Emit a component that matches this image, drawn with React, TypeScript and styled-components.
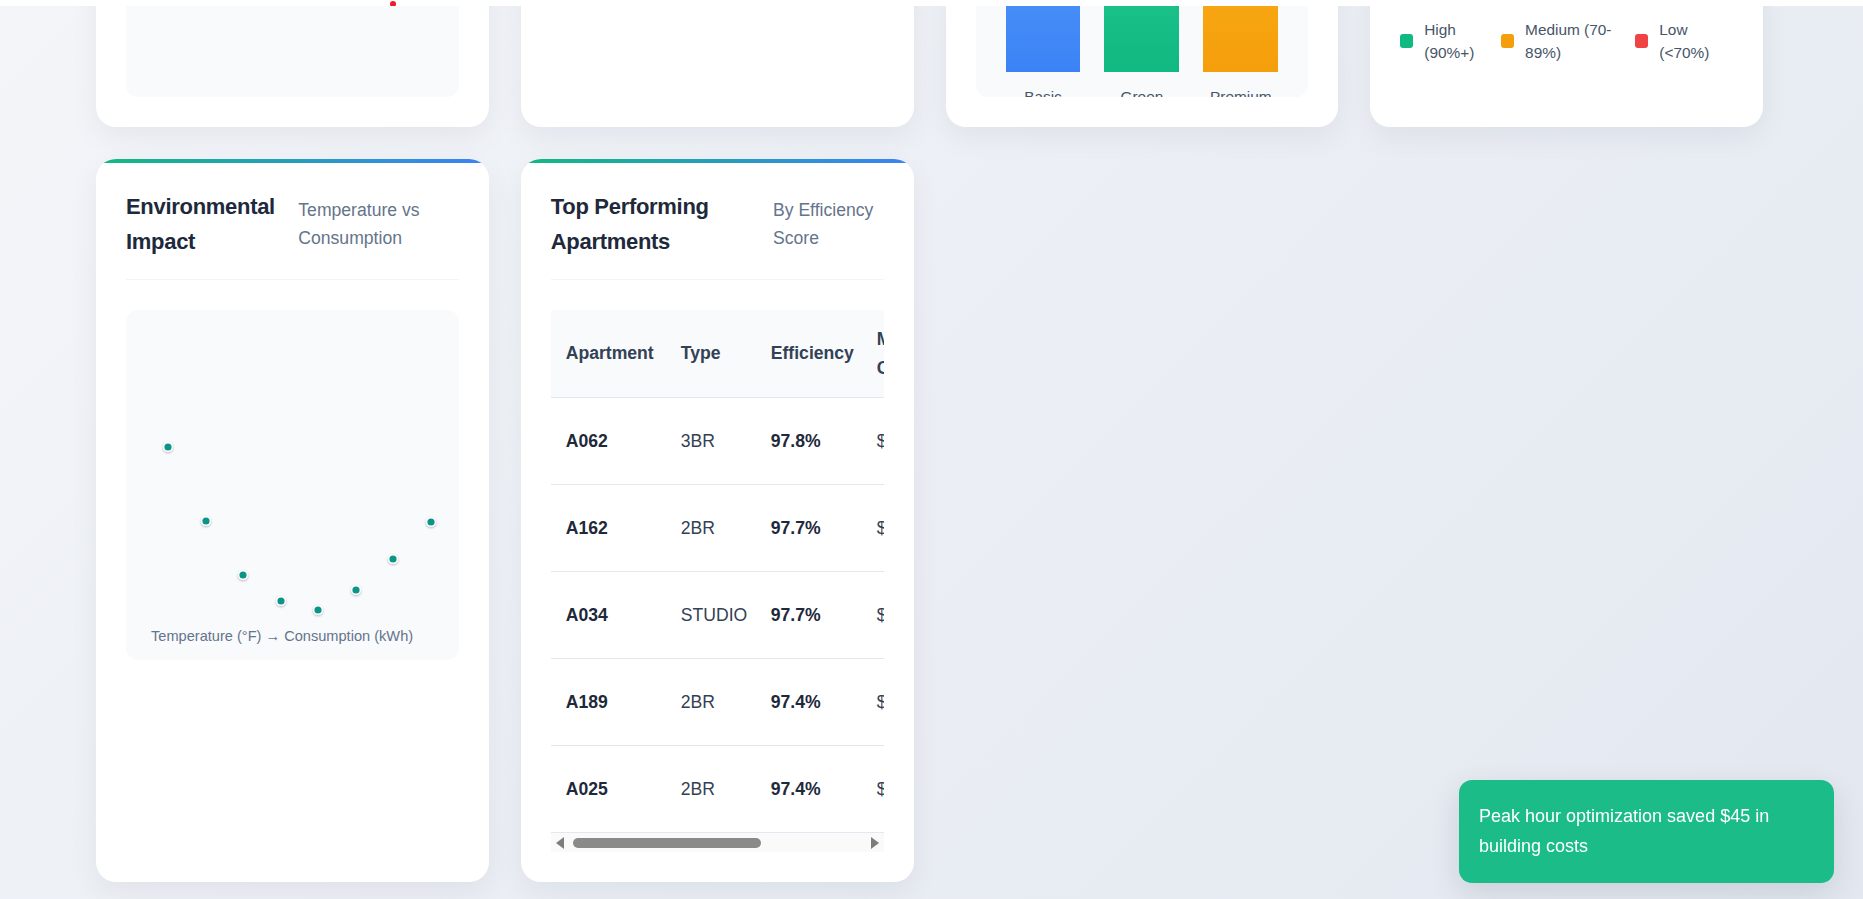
import React from "react";
import styled, { createGlobalStyle } from "styled-components";

const GlobalStyle = createGlobalStyle`
  *, *::before, *::after { box-sizing: border-box; }
  html, body { margin: 0; padding: 0; overflow: hidden; }
  body {
    font-family: "Liberation Sans", Arial, sans-serif;
    font-size: 17.6px;
    line-height: 1.6;
    color: #334155;
    background: #e9edf3;
  }
`;

const Page = styled.div`
  display: flex;
  flex-direction: column;
  height: 100vh;
  overflow: hidden;
  padding: 0 100px 0 96px;
  background: linear-gradient(135deg, #f3f5f9 0%, #e3e8f0 100%);
`;

const TopStrip = styled.div`
  position: fixed;
  top: 0;
  left: 0;
  right: 0;
  height: 6px;
  background: #ffffff;
  z-index: 10;
  overflow: hidden;
`;

const LiveDot = styled.span`
  position: absolute;
  left: 390px;
  top: 1px;
  width: 6px;
  height: 6px;
  border-radius: 50%;
  background: #ef1b2d;
`;

const Dashboard = styled.main`
  display: grid;
  grid-template-columns: repeat(4, minmax(0, 1fr));
  gap: 32px;
  margin-top: -283px;
  flex-shrink: 0;
`;

const Card = styled.section`
  position: relative;
  display: flex;
  flex-direction: column;
  min-width: 0;
  padding: 30px;
  background: #ffffff;
  border-radius: 20px;
  box-shadow: 0 10px 30px rgba(15, 23, 42, 0.06);
  overflow: hidden;

  &::before {
    content: "";
    position: absolute;
    top: 0;
    left: 0;
    right: 0;
    height: 4px;
    background: linear-gradient(90deg, #10b981, #3b82f6);
  }
`;

const CardHeader = styled.header`
  display: flex;
  justify-content: space-between;
  align-items: center;
  gap: 16px;
  padding-bottom: 20px;
  margin-bottom: 30px;
  border-bottom: 1px solid #f1f5f9;
`;

const CardTitle = styled.h3`
  margin: 0;
  font-size: 22px;
  font-weight: 700;
  line-height: 1.6;
  letter-spacing: -0.3px;
  color: #1e293b;
`;

const CardSubtitle = styled.span`
  font-size: 17.6px;
  line-height: 1.6;
  color: #64748b;
`;

const ChartPanel = styled.div<{ $grow?: boolean }>`
  position: relative;
  flex: ${(p) => (p.$grow ? "1 0 350px" : "0 0 350px")};
  min-height: 350px;
  background: #f8fafc;
  border-radius: 12px;
  overflow: hidden;
`;

const ChartCanvas = styled.svg`
  position: absolute;
  inset: 0;
  width: 100%;
  height: 100%;
`;

const ScatterPanel = styled(ChartPanel)`
  display: flex;
  align-items: flex-end;
  padding: 0 25px 12px;
`;

const ChartCaption = styled.span`
  position: relative;
  font-size: 14.6px;
  line-height: 1.6;
  color: #64748b;
`;

const BarPanel = styled(ChartPanel)`
  display: flex;
  align-items: flex-start;
  gap: 24px;
  padding: 30px 30px 0;
`;

const BarColumn = styled.div`
  flex: 1;
  display: flex;
  flex-direction: column;
  align-items: center;
`;

const BarTrack = styled.div`
  width: 100%;
  height: 295px;
  display: flex;
  align-items: flex-end;
`;

const Bar = styled.div<{ $from: string; $to: string }>`
  width: 100%;
  background: linear-gradient(180deg, ${(p) => p.$from}, ${(p) => p.$to});
`;

const BarLabel = styled.span`
  margin-top: 13px;
  font-size: 15.4px;
  line-height: 1.6;
  color: #475569;
`;

const Legend = styled.div`
  display: flex;
  margin: auto 0 33px;
`;

const LegendItem = styled.div`
  display: flex;
  align-items: center;
  gap: 11px;
  min-width: 0;
`;

const LegendSwatch = styled.span<{ $color: string }>`
  flex-shrink: 0;
  width: 13px;
  height: 14px;
  border-radius: 3px;
  background: ${(p) => p.$color};
`;

const LegendText = styled.span`
  font-size: 15.4px;
  line-height: 1.5;
  color: #475569;
`;

const TableScroll = styled.div`
  overflow: hidden;
`;

const Table = styled.table`
  width: 534px;
  table-layout: fixed;
  border-collapse: collapse;
`;

const Th = styled.th`
  padding: 15px;
  text-align: left;
  font-weight: 700;
  font-size: 17.6px;
  line-height: 1.6;
  color: #334155;
  background: #f8fafc;
  border-bottom: 1px solid #e2e8f0;
`;

const Td = styled.td<{ $strong?: boolean }>`
  padding: 29px 15px;
  font-size: 17.6px;
  line-height: 1.6;
  white-space: nowrap;
  font-weight: ${(p) => (p.$strong ? 700 : 400)};
  color: ${(p) => (p.$strong ? "#1e293b" : "#334155")};
  border-bottom: 1px solid #e2e8f0;
`;

const ScrollBar = styled.div`
  display: flex;
  align-items: center;
  gap: 7px;
  height: 19px;
  padding: 0 5px;
  background: #fafafa;
`;

const ScrollArrow = styled.span<{ $dir: "left" | "right" }>`
  flex-shrink: 0;
  width: 0;
  height: 0;
  border-top: 6px solid transparent;
  border-bottom: 6px solid transparent;
  ${(p) =>
    p.$dir === "left"
      ? "border-right: 8px solid #7d7d7d;"
      : "border-left: 8px solid #7d7d7d;"}
`;

const ScrollRail = styled.div`
  flex: 1;
  display: flex;
  align-items: center;
  padding-left: 2px;
`;

const ScrollThumb = styled.span`
  height: 10px;
  border-radius: 5px;
  background: #8a8a8a;
`;

const Toast = styled.div`
  position: fixed;
  right: 29px;
  bottom: 16px;
  width: 375px;
  padding: 21px 20px;
  border-radius: 13px;
  background: rgba(16, 185, 129, 0.95);
  color: #ffffff;
  font-size: 18px;
  line-height: 1.7;
  box-shadow: 0 10px 30px rgba(15, 23, 42, 0.12);
  z-index: 20;
`;

const scatter = [
  [42, 137],
  [80, 211],
  [117, 265],
  [155, 291],
  [192, 300],
  [230, 280],
  [267, 249],
  [305, 212],
];

const bars = [
  { label: "Basic", value: 0.72, from: "#60a5fa", to: "#3b82f6" },
  { label: "Green", value: 0.86, from: "#34d399", to: "#10b981" },
  { label: "Premium", value: 0.95, from: "#fbbf24", to: "#f59e0b" },
];

const legend = [
  { color: "#10b981", text: "High (90%+)" },
  { color: "#f59e0b", text: "Medium (70-89%)" },
  { color: "#ef4444", text: "Low (<70%)" },
];

const apartments = [
  { id: "A062", type: "3BR", eff: "97.8%", cost: "$98.40", save: "$24.10" },
  { id: "A162", type: "2BR", eff: "97.7%", cost: "$84.15", save: "$21.60" },
  { id: "A034", type: "STUDIO", eff: "97.7%", cost: "$52.30", save: "$14.25" },
  { id: "A189", type: "2BR", eff: "97.4%", cost: "$86.70", save: "$20.85" },
  { id: "A025", type: "2BR", eff: "97.4%", cost: "$85.95", save: "$20.40" },
];

const columnWidths = [115, 90, 106, 105, 118];
const TABLE_WIDTH = 534;
const VISIBLE_WIDTH = 345;

export default function App() {
  const thumbShare = Math.min(1, VISIBLE_WIDTH / TABLE_WIDTH);

  return (
    <>
      <GlobalStyle />
      <TopStrip>
        <LiveDot />
      </TopStrip>
      <Page>
        <Dashboard>
          <Card>
            <ChartPanel $grow />
          </Card>

          <Card />

          <Card>
            <BarPanel $grow>
              {bars.map((b) => (
                <BarColumn key={b.label}>
                  <BarTrack>
                    <Bar $from={b.from} $to={b.to} style={{ height: `${b.value * 100}%` }} />
                  </BarTrack>
                  <BarLabel>{b.label}</BarLabel>
                </BarColumn>
              ))}
            </BarPanel>
          </Card>

          <Card>
            <Legend>
              {legend.map((l) => (
                <LegendItem key={l.text}>
                  <LegendSwatch $color={l.color} />
                  <LegendText>{l.text}</LegendText>
                </LegendItem>
              ))}
            </Legend>
          </Card>

          <Card>
            <CardHeader>
              <CardTitle>Environmental Impact</CardTitle>
              <CardSubtitle>Temperature vs Consumption</CardSubtitle>
            </CardHeader>
            <ScatterPanel>
              <ChartCanvas>
                <defs>
                  <filter id="dotShadow" x="-100%" y="-100%" width="300%" height="300%">
                    <feDropShadow dx="0" dy="1" stdDeviation="1" floodColor="#0f172a" floodOpacity="0.3" />
                  </filter>
                </defs>
                {scatter.map(([x, y]) => (
                  <circle
                    key={`${x}-${y}`}
                    cx={x}
                    cy={y}
                    r={3.6}
                    fill="#0d9488"
                    stroke="#ffffff"
                    strokeWidth={3}
                    paintOrder="stroke"
                    filter="url(#dotShadow)"
                  />
                ))}
              </ChartCanvas>
              <ChartCaption>Temperature (°F) → Consumption (kWh)</ChartCaption>
            </ScatterPanel>
          </Card>

          <Card>
            <CardHeader>
              <CardTitle>Top Performing Apartments</CardTitle>
              <CardSubtitle>By Efficiency Score</CardSubtitle>
            </CardHeader>
            <TableScroll>
              <Table>
                <colgroup>
                  {columnWidths.map((w, i) => (
                    <col key={i} style={{ width: w }} />
                  ))}
                </colgroup>
                <thead>
                  <tr>
                    <Th>Apartment</Th>
                    <Th>Type</Th>
                    <Th>Efficiency</Th>
                    <Th>Monthly Cost</Th>
                    <Th>Savings</Th>
                  </tr>
                </thead>
                <tbody>
                  {apartments.map((a) => (
                    <tr key={a.id}>
                      <Td $strong>{a.id}</Td>
                      <Td>{a.type}</Td>
                      <Td $strong>{a.eff}</Td>
                      <Td>{a.cost}</Td>
                      <Td>{a.save}</Td>
                    </tr>
                  ))}
                </tbody>
              </Table>
            </TableScroll>
            <ScrollBar>
              <ScrollArrow $dir="left" />
              <ScrollRail>
                <ScrollThumb style={{ width: `${thumbShare * 100}%` }} />
              </ScrollRail>
              <ScrollArrow $dir="right" />
            </ScrollBar>
          </Card>
        </Dashboard>
      </Page>
      <Toast>Peak hour optimization saved $45 in building costs</Toast>
    </>
  );
}
